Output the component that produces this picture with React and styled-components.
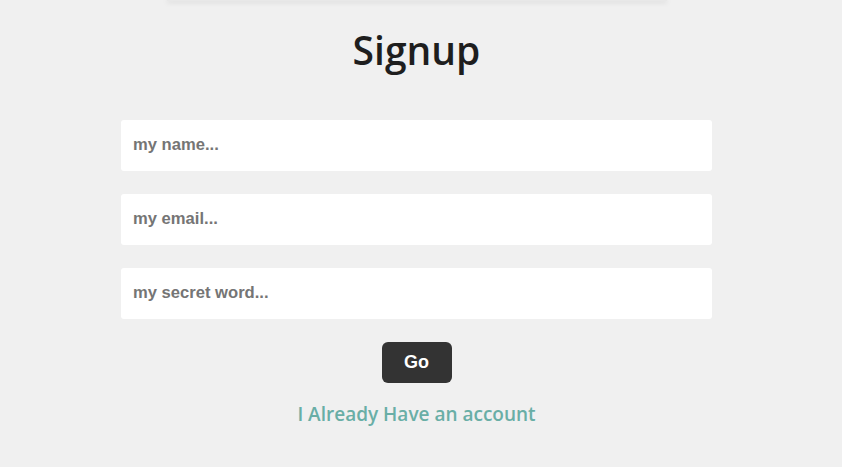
import React from 'react';
import styled, { createGlobalStyle } from 'styled-components';

const GlobalStyle = createGlobalStyle`
  html, body {
    margin: 0;
    padding: 0;
    background: #f0f0f0;
  }
  * {
    box-sizing: border-box;
  }
`;

function App() {
  return (
    <>
      <GlobalStyle />
      <Page>
        <TopBar />
        <Title>Signup</Title>
        <Form onSubmit={(e) => e.preventDefault()}>
          <Input type="text" placeholder="my name..." />
          <Input type="email" placeholder="my email..." />
          <Input type="password" placeholder="my secret word..." />
          <Button type="submit">Go</Button>
        </Form>
        <Link href="#">I Already Have an account</Link>
      </Page>
    </>
  );
}

const Page = styled.main`
  width: calc(100% - 9px);
  min-height: 467px;
  display: flex;
  flex-direction: column;
  align-items: center;
`;

const TopBar = styled.div`
  width: 500px;
  height: 1px;
  background: #e8e8e8;
  box-shadow: 0 1px 5px rgba(0, 0, 0, 0.25);
`;

const Title = styled.h1`
  margin: 22px 0 0;
  font-family: "Open Sans", "Noto Sans", sans-serif;
  font-weight: 600;
  font-size: 39px;
  line-height: 54px;
  color: #1e1e1e;
`;

const Form = styled.form`
  width: 591px;
  margin-top: 43px;
  display: flex;
  flex-direction: column;
  align-items: center;
  gap: 23px;
`;

const Input = styled.input`
  width: 100%;
  height: 51px;
  border: none;
  border-radius: 3px;
  background: #fff;
  padding: 0 12px 2px;
  font-family: "Liberation Sans", Arial, sans-serif;
  font-weight: 700;
  font-size: 16.6px;
  color: #333;
  outline: none;

  &::placeholder {
    color: #757575;
  }
`;

const Button = styled.button`
  width: 70px;
  height: 41px;
  border: none;
  border-radius: 6px;
  background: #333;
  color: #fff;
  font-family: "Liberation Sans", Arial, sans-serif;
  font-weight: 700;
  font-size: 18px;
  cursor: pointer;
`;

const Link = styled.a`
  margin-top: 18px;
  font-family: "Open Sans", "Noto Sans", sans-serif;
  font-weight: 600;
  font-size: 19px;
  line-height: 26px;
  color: #69aea6;
  text-decoration: none;
`;

export default App;
